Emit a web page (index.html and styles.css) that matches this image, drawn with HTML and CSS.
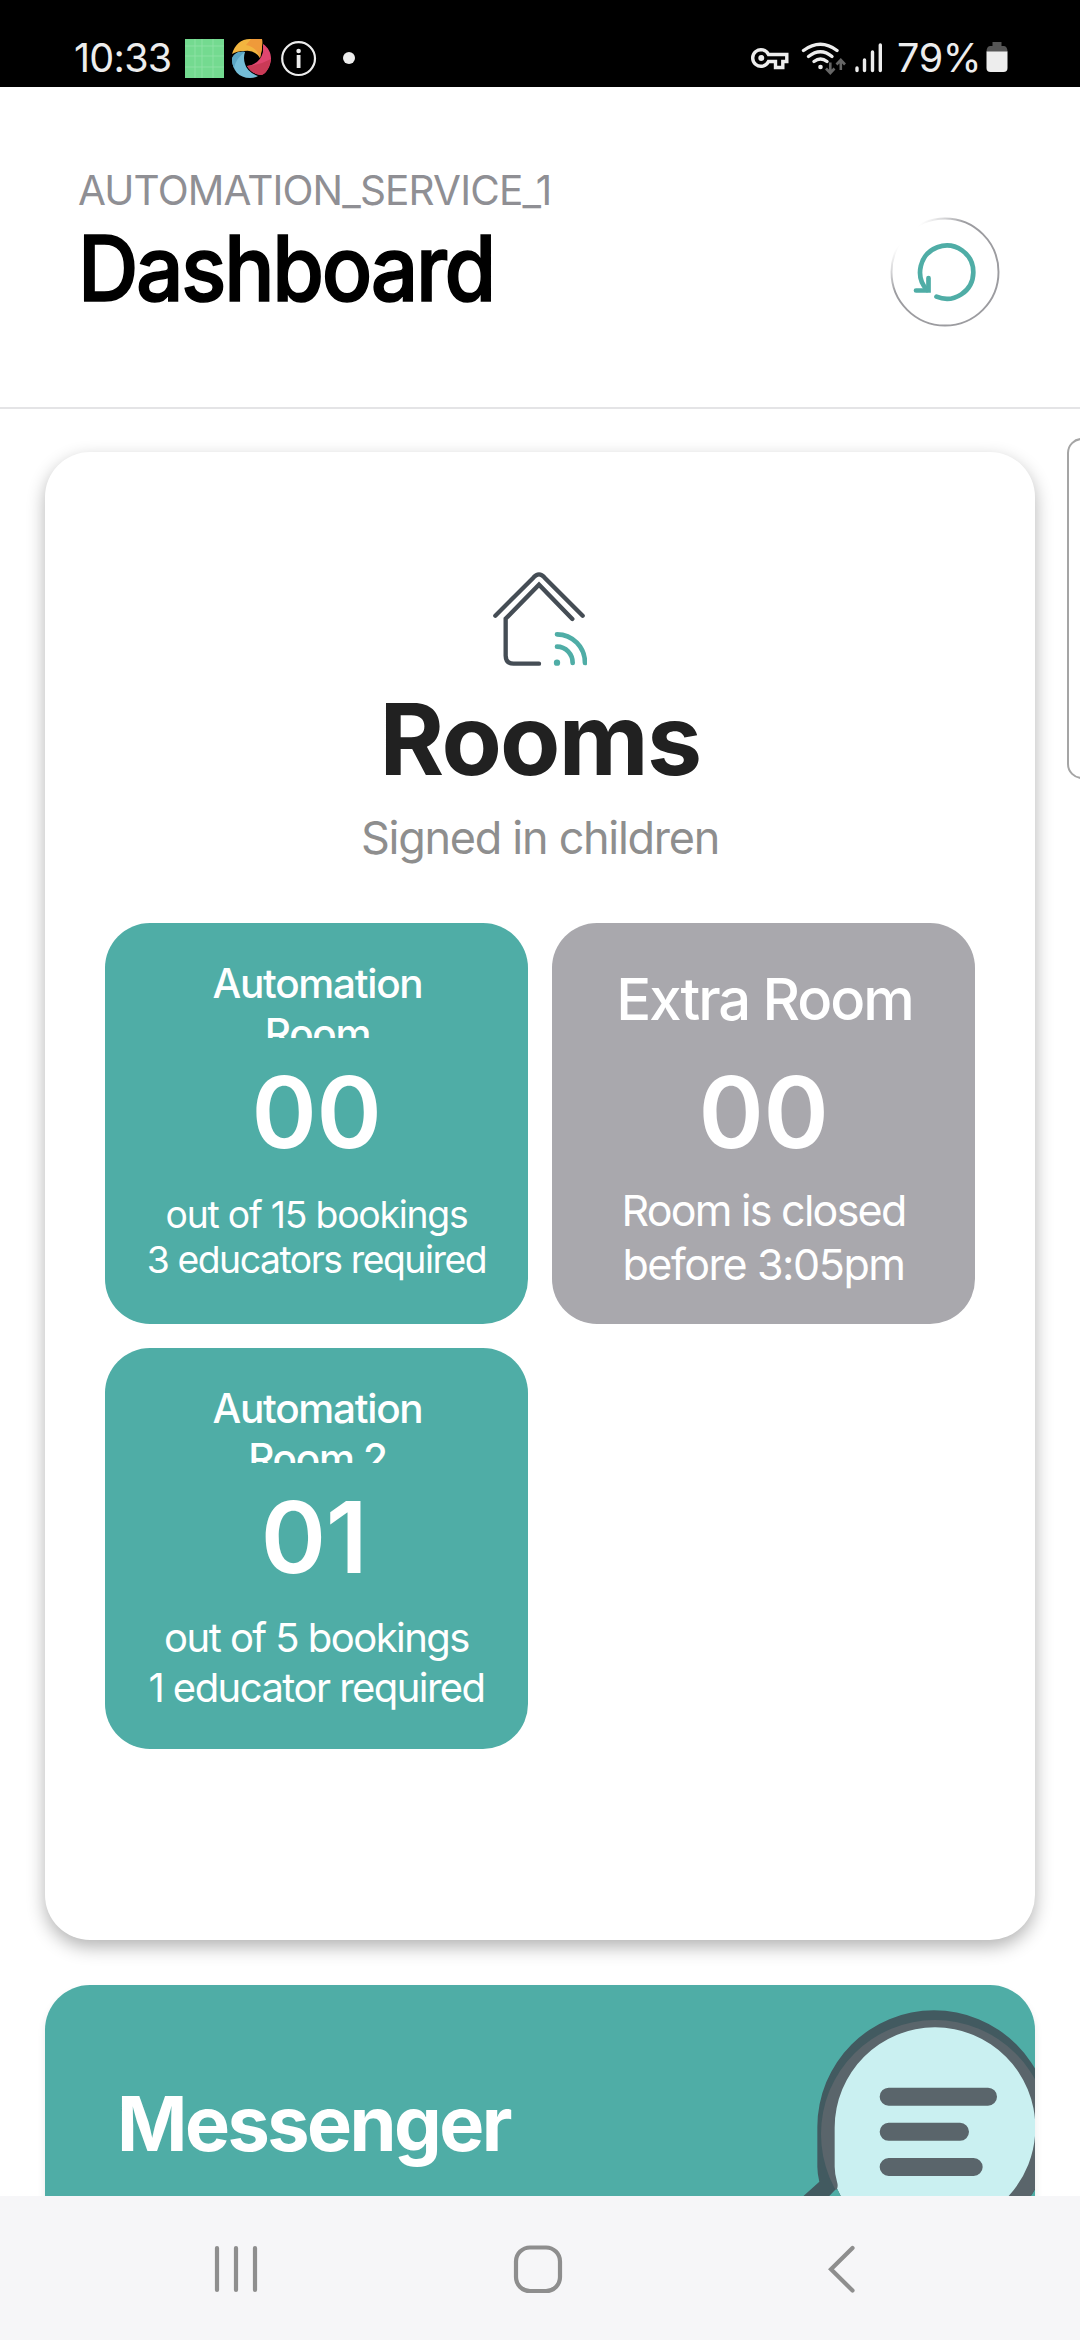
FILE: index.html
```html
<!DOCTYPE html>
<html lang="en">
<head>
<meta charset="utf-8">
<title>Dashboard</title>
<link rel="stylesheet" href="styles.css">
</head>
<body>
<div class="status-bar">
  <div class="status-left">
    <span class="clock">10:33</span>
    <svg class="status-icons" width="172" height="42" viewBox="0 0 172 42">
      <rect x="1" y="1" width="39" height="39" fill="#74da90"/>
      <path d="M11 1V40M18 1V40M1 18H40M1 29H40M1 8H40M29 1V40" stroke="#93e3a8" stroke-width=".8"/>
      <path d="M48 16C51 6 58 0 68 1H78Q79 9 76 20Q70 11 60 13Q53 13 48 16Z" fill="#f2b53f"/>
      <path d="M67 1H78Q79 9 76 20Q73 9 62 7Z" fill="#ef9a3a"/>
      <path d="M79 6C87 11 89 21 85 29C82 35 79 37 77 37C70 36 66 33 63 28Q76 26 79 14Z" fill="#e0466f"/>
      <path d="M85 29C82 35 79 37 77 37C70 36 66 33 63 28Q76 27 87 21Z" fill="#c93a56"/>
      <path d="M61 14C53 13 49 17 48 21C48 32 55 40 66 40Q71 40 74 38Q63 34 61 26Q59 20 61 14Z" fill="#74bdd7"/>
      <path d="M61 14C53 13 49 17 48 21Q48 26 50 30Q52 20 61 14Z" fill="#5ba6c4"/>
      <circle cx="114.600" cy="20.600" r="16.400" fill="none" stroke="#ededed" stroke-width="2.200"/>
      <path d="M114.600 17V30" stroke="#ededed" stroke-width="3.800"/>
      <circle cx="114.600" cy="13" r="2.300" fill="#ededed"/>
      <circle cx="165" cy="20" r="6" fill="#ededed"/>
    </svg>
  </div>
  <div class="status-right">
    <svg class="status-icons" width="134" height="36" viewBox="0 0 134 36">
      <g fill="none" stroke="#ededed">
        <path d="M18.500 13.500H36.800V20.500H32.800V26.500H25.500V20.500H18.500A8.300 8.300 0 1 1 18.500 13.500Z" stroke-width="3.400"/>
        <path d="M53.500 9.500Q70.500-3 87 9.500" stroke-width="3.400" stroke-linecap="round"/>
        <path d="M58.500 15.500Q70.500 6 82 15.500" stroke-width="3.400" stroke-linecap="round"/>
        <path d="M64 20.500Q70.500 15.500 77 20.500" stroke-width="3.400" stroke-linecap="round"/>
        <path d="M107 27V29.500M114.500 19V29.500M122.500 11V29.500M130.300 4V29.500" stroke-width="3.400" stroke-linecap="round"/>
      </g>
      <circle cx="11.300" cy="17" r="3" fill="#ededed"/>
      <circle cx="70.500" cy="26" r="2.300" fill="#ededed"/>
      <path d="M80.300 21.500V31M76 27.500L80.300 32L84.500 27.500M90.800 29V20M86.500 23.500L90.800 19L95 23.500" fill="none" stroke="#666" stroke-width="2.600"/>
    </svg>
    <span class="battery-level">79%</span>
    <svg class="status-icons" width="22" height="32" viewBox="0 0 22 32">
      <path d="M6.500 1H15.500V5H18Q21.500 5.500 21.500 11H.5Q.5 5.500 4 5H6.500Z" fill="#555"/>
      <path d="M.5 10.500H21.500V27Q21.500 31 17.500 31H4.500Q.5 31 .5 27Z" fill="#ededed"/>
    </svg>
  </div>
</div>

<header class="header">
  <div>
    <div class="service">AUTOMATION_SERVICE_1</div>
    <h1 class="title">Dashboard</h1>
  </div>
  <svg class="refresh" width="110" height="110" viewBox="0 0 110 110">
    <defs>
      <linearGradient id="rim" x1="0" y1="0" x2="1" y2="1">
        <stop offset=".16" stop-color="#fff"/>
        <stop offset=".36" stop-color="#9c9ca0"/>
      </linearGradient>
    </defs>
    <circle cx="55" cy="55" r="53.500" fill="none" stroke="url(#rim)" stroke-width="1.900"/>
    <g fill="none" stroke="#4fada6" stroke-width="4.700" stroke-linecap="round">
      <path d="M46.500 79.700A26.600 26.600 0 1 0 37 73"/>
      <path d="M38.500 61V73.500H26"/>
    </g>
  </svg>
</header>

<main class="content">
  <div class="carousel">
    <section class="rooms-card">
      <svg class="house" width="94" height="94" viewBox="459 96 282 282">
        <g fill="none" stroke="#454d55" stroke-width="13" stroke-linecap="round">
          <path d="M466 227L580 113Q597 93 614 113L728 227"/>
          <path d="M597 371H521Q497 371 497 347V236L597 134L697 237"/>
        </g>
        <g fill="none" stroke="#4fada6" stroke-width="14" stroke-linecap="round">
          <path d="M651 283A84 86 0 0 1 735 369M651 320A47 49 0 0 1 698 369"/>
        </g>
        <circle cx="651" cy="368" r="9.500" fill="#4fada6"/>
      </svg>
      <h2 class="rooms-title">Rooms</h2>
      <div class="rooms-subtitle">Signed in children</div>
      <div class="room-grid">
        <article class="room">
          <div class="room-name">Automation<br>Room</div>
          <div class="room-count">00</div>
          <div class="room-info info-small"><div class="line-a">out of 15 bookings</div><div>3 educators required</div></div>
        </article>
        <article class="room room-closed">
          <div class="room-name name-large">Extra Room</div>
          <div class="room-count">00</div>
          <div class="room-info info-large"><div>Room is closed</div><div class="line-b">before 3:05pm</div></div>
        </article>
        <article class="room">
          <div class="room-name">Automation<br>Room 2</div>
          <div class="room-count count-one">01</div>
          <div class="room-info info-medium"><div>out of 5 bookings</div><div>1 educator required</div></div>
        </article>
      </div>
    </section>
    <div class="next-card"></div>
  </div>

  <section class="messenger">
    <h2 class="messenger-title">Messenger</h2>
    <svg class="bubble" width="235" height="211" viewBox="120 255 705 633">
      <path d="M172 681A350 350 0 0 1 872 681A352 352 0 0 1 770 940H400L233 862L204 892H126L178 845Q172 820 172 800Z" fill="#425a60"/>
      <circle cx="525" cy="702" r="342" fill="#5a656b"/>
      <path d="M224 683A301 301 0 0 1 826 683A301 301 0 0 1 745 889H243L231 866Q235 858 231 845Q224 820 224 800Z" fill="#caf0f1"/>
      <path d="M204 893L232 866L244 893Z" fill="#4fada6"/>
      <path d="M386 590H684M386 695.500H600M386 801H641" stroke="#5a656b" stroke-width="54" stroke-linecap="round"/>
    </svg>
  </section>
</main>

<nav class="nav-bar">
  <svg width="720" height="144" viewBox="0 0 720 144">
    <g fill="none" stroke="#8e8e8e" stroke-width="4.200" stroke-linecap="round">
      <path d="M37 52V94M56 52V94M75 52V94"/>
      <rect x="336" y="51.500" width="44" height="43.500" rx="14"/>
      <path d="M672.500 52L651 73.300L672.500 94.500"/>
    </g>
  </svg>
</nav>
</body>
</html>
```
FILE: styles.css
```css
* {
  box-sizing: border-box;
  margin: 0;
}

body {
  display: flex;
  flex-direction: column;
  width: 1080px;
  height: 2340px;
  overflow: hidden;
  background: #fff;
  font-family: Inter, "Liberation Sans", sans-serif;
}

svg {
  display: block;
  flex: none;
}

/* Status bar */
.status-bar {
  display: flex;
  justify-content: space-between;
  height: 87px;
  padding: 34px 72px 0 74px;
  background: #000;
  color: #ededed;
  font-size: 39.5px;
  line-height: 48px;
}

.status-left,
.status-right {
  display: flex;
}

.status-left {
  gap: 10px;
}

.status-left .status-icons {
  margin-top: 4px;
}

.clock {
  width: 100px;
  letter-spacing: -0.74px;
}

.status-right .status-icons {
  margin-top: 7px;
}

.battery-level {
  width: 89px;
  margin-left: 13px;
  letter-spacing: -0.3px;
}

/* Header */
.header {
  display: flex;
  justify-content: space-between;
  height: 322px;
  padding: 81px 80px 0 78px;
  border-bottom: 2px solid #e4e4e6;
}

.service {
  color: #8f8f94;
  font-size: 40.5px;
  line-height: 46px;
  letter-spacing: -0.85px;
}

.title {
  font-size: 91px;
  font-weight: 500;
  line-height: 108px;
  letter-spacing: -2.5px;
  -webkit-text-stroke: 1.7px #000;
  transform: scaleX(0.92);
  transform-origin: left;
}

.refresh {
  margin-top: 49px;
}

/* Content */
.content {
  flex: 1;
  min-height: 0;
  overflow: hidden;
  padding: 29px 0 0 45px;
}

.carousel {
  display: flex;
  gap: 32px;
}

.rooms-card {
  display: flex;
  flex: none;
  flex-direction: column;
  align-items: center;
  width: 990px;
  height: 1488px;
  margin-top: 14px;
  padding: 120px 60px 0;
  border-radius: 45px;
  background: #fff;
  box-shadow: 0 7px 18px rgba(0, 0, 0, 0.3);
}

.rooms-title {
  margin-top: 19px;
  color: #212121;
  font-size: 98.5px;
  font-weight: 700;
  line-height: 110px;
  letter-spacing: -1.72px;
}

.rooms-subtitle {
  margin-top: 16px;
  color: #8e8e8e;
  font-size: 45px;
  line-height: 54px;
  letter-spacing: -1.29px;
}

.room-grid {
  display: grid;
  grid-template-columns: 423px 423px;
  gap: 24px;
  margin-top: 58px;
}

.room {
  height: 401px;
  padding-top: 35px;
  border-radius: 45px;
  background: #4fada6;
  color: #fff;
  text-align: center;
}

.room-closed {
  background: #a9a8ad;
}

.room-name {
  height: 80px;
  padding: 1px 0 0 2px;
  overflow: hidden;
  font-size: 40.5px;
  font-weight: 500;
  line-height: 49.7px;
  letter-spacing: -1.29px;
}

.name-large {
  font-size: 58px;
  line-height: 80px;
  letter-spacing: -2.05px;
}

.room-count {
  margin-top: 24px;
  font-size: 99px;
  font-weight: 600;
  line-height: 100px;
  letter-spacing: -0.31px;
}

.count-one {
  padding-right: 5px;
}

.room-info {
  display: flex;
  flex-direction: column;
  justify-content: center;
  height: 150px;
}

.info-small {
  font-size: 37.3px;
  line-height: 45.5px;
  letter-spacing: -1.44px;
}

.info-small .line-a {
  letter-spacing: -1.21px;
}

.info-medium {
  padding-top: 2px;
  font-size: 40px;
  line-height: 49.7px;
  letter-spacing: -1.54px;
}

.info-large {
  font-size: 43px;
  line-height: 54px;
  letter-spacing: -1.74px;
}

.info-large .line-b {
  letter-spacing: -1.42px;
}

.next-card {
  flex: none;
  width: 60px;
  height: 341px;
  border: 2.5px solid #a5a5a5;
  border-radius: 15px;
}

/* Messenger */
.messenger {
  display: flex;
  justify-content: space-between;
  width: 990px;
  height: 400px;
  margin-top: 45px;
  padding-left: 72px;
  overflow: hidden;
  border-radius: 45px;
  background: #4fada6;
  box-shadow: 0 5px 8px rgba(0, 0, 0, 0.08);
}

.messenger-title {
  margin-top: 94px;
  color: #fff;
  font-size: 75.6px;
  font-weight: 700;
  line-height: 90px;
  letter-spacing: -2.54px;
}

/* Navigation bar */
.nav-bar {
  display: flex;
  justify-content: center;
  height: 144px;
  background: #f6f6f8;
}
```
